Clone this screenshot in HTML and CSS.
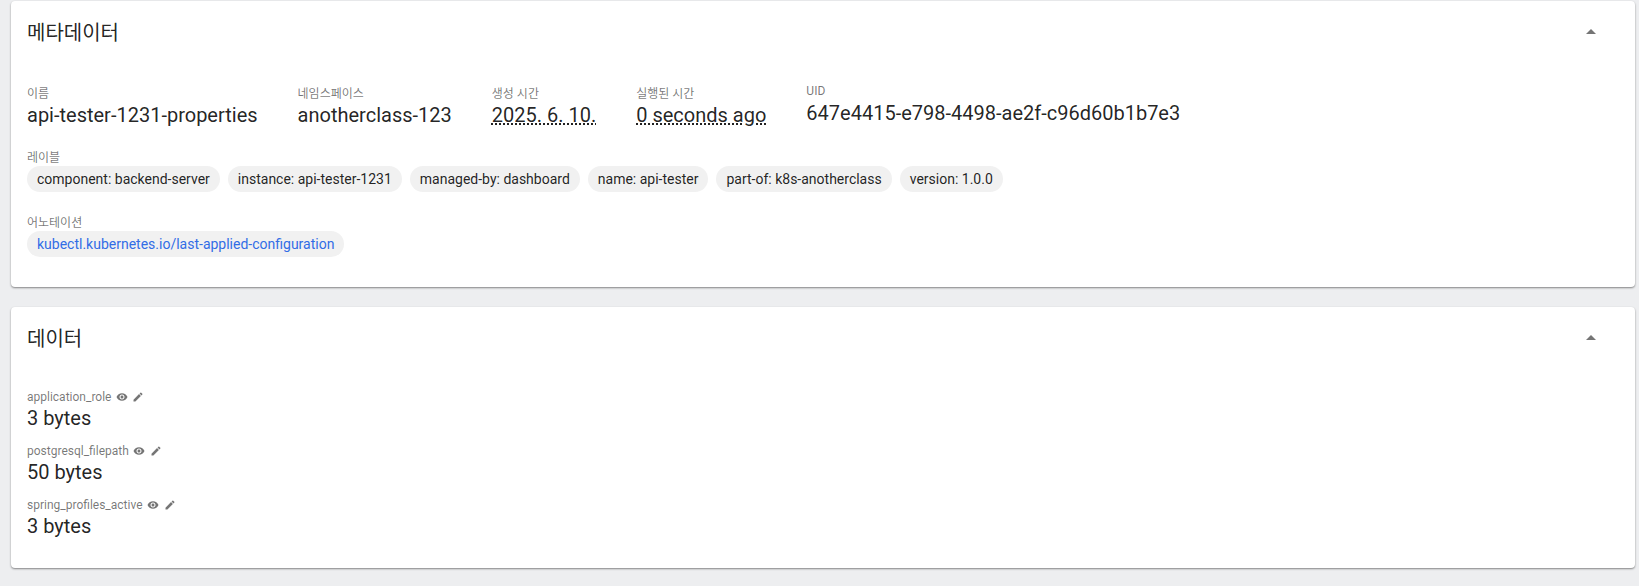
FILE: index.html
```html
<!DOCTYPE html>
<html lang="ko">
<head>
  <meta charset="UTF-8" />
  <title>Secret</title>
  <link rel="stylesheet" href="styles.css">
</head>
<body>

  <!-- Metadata card -->
  <section class="card card-meta">
    <header class="card-header">
      <h2>메타데이터</h2>
      <svg class="toggle" width="24" height="24" viewBox="0 0 24 24"><path d="M7 14l5-5 5 5z"/></svg>
    </header>
    <div class="card-body">
      <div class="fields">
        <div class="field"><div class="label label-ko">이름</div><div class="value">api-tester-1231-properties</div></div>
        <div class="field"><div class="label label-ko">네임스페이스</div><div class="value">anotherclass-123</div></div>
        <div class="field"><div class="label label-ko">생성 시간</div><div class="value"><span class="dotted">2025. 6. 10.</span></div></div>
        <div class="field"><div class="label label-ko">실행된 시간</div><div class="value"><span class="dotted">0 seconds ago</span></div></div>
        <div class="field field-uid"><div class="label">UID</div><div class="value">647e4415-e798-4498-ae2f-c96d60b1b7e3</div></div>
      </div>

      <div class="label">레이블</div>
      <div class="chips">
        <span class="chip">component: backend-server</span>
        <span class="chip">instance: api-tester-1231</span>
        <span class="chip">managed-by: dashboard</span>
        <span class="chip">name: api-tester</span>
        <span class="chip">part-of: k8s-anotherclass</span>
        <span class="chip">version: 1.0.0</span>
      </div>

      <div class="label label-annot">어노테이션</div>
      <div class="chips">
        <span class="chip chip-link">kubectl.kubernetes.io/last-applied-configuration</span>
      </div>
    </div>
  </section>

  <!-- Data card -->
  <section class="card card-data">
    <header class="card-header">
      <h2>데이터</h2>
      <svg class="toggle" width="24" height="24" viewBox="0 0 24 24"><path d="M7 14l5-5 5 5z"/></svg>
    </header>
    <div class="card-body">
      <div class="data-row">
        <div class="data-key">application_role
          <svg class="icon" viewBox="0 0 24 24"><path d="M12 4.5C7 4.5 2.73 7.61 1 12c1.73 4.39 6 7.5 11 7.5s9.27-3.11 11-7.5c-1.73-4.39-6-7.5-11-7.5zM12 17c-2.76 0-5-2.24-5-5s2.24-5 5-5 5 2.24 5 5-2.24 5-5 5zm0-8c-1.66 0-3 1.34-3 3s1.34 3 3 3 3-1.34 3-3-1.34-3-3-3z"/></svg>
          <svg class="icon" viewBox="0 0 24 24"><path d="M3 17.25V21h3.75L17.81 9.94l-3.75-3.75L3 17.25zM20.71 7.04c.39-.39.39-1.02 0-1.41l-2.34-2.34c-.39-.39-1.02-.39-1.41 0l-1.83 1.83 3.75 3.75 1.83-1.83z"/></svg>
        </div>
        <div class="value">3 bytes</div>
      </div>
      <div class="data-row">
        <div class="data-key">postgresql_filepath
          <svg class="icon" viewBox="0 0 24 24"><path d="M12 4.5C7 4.5 2.73 7.61 1 12c1.73 4.39 6 7.5 11 7.5s9.27-3.11 11-7.5c-1.73-4.39-6-7.5-11-7.5zM12 17c-2.76 0-5-2.24-5-5s2.24-5 5-5 5 2.24 5 5-2.24 5-5 5zm0-8c-1.66 0-3 1.34-3 3s1.34 3 3 3 3-1.34 3-3-1.34-3-3-3z"/></svg>
          <svg class="icon" viewBox="0 0 24 24"><path d="M3 17.25V21h3.75L17.81 9.94l-3.75-3.75L3 17.25zM20.71 7.04c.39-.39.39-1.02 0-1.41l-2.34-2.34c-.39-.39-1.02-.39-1.41 0l-1.83 1.83 3.75 3.75 1.83-1.83z"/></svg>
        </div>
        <div class="value">50 bytes</div>
      </div>
      <div class="data-row">
        <div class="data-key">spring_profiles_active
          <svg class="icon" viewBox="0 0 24 24"><path d="M12 4.5C7 4.5 2.73 7.61 1 12c1.73 4.39 6 7.5 11 7.5s9.27-3.11 11-7.5c-1.73-4.39-6-7.5-11-7.5zM12 17c-2.76 0-5-2.24-5-5s2.24-5 5-5 5 2.24 5 5-2.24 5-5 5zm0-8c-1.66 0-3 1.34-3 3s1.34 3 3 3 3-1.34 3-3-1.34-3-3-3z"/></svg>
          <svg class="icon" viewBox="0 0 24 24"><path d="M3 17.25V21h3.75L17.81 9.94l-3.75-3.75L3 17.25zM20.71 7.04c.39-.39.39-1.02 0-1.41l-2.34-2.34c-.39-.39-1.02-.39-1.41 0l-1.83 1.83 3.75 3.75 1.83-1.83z"/></svg>
        </div>
        <div class="value">3 bytes</div>
      </div>
    </div>
  </section>

</body>
</html>
```

FILE: styles.css
```css
/* General styles */
html, body {
  height: 100%;
}

body {
  margin: 0;
  padding: 1px 4px 0 11px;
  box-sizing: border-box;
  overflow: hidden;
  background-color: #edeef0;
  color: rgba(0, 0, 0, 0.87);
  font-family: Roboto, "Noto Sans CJK KR", sans-serif;
}

/* Cards */
.card {
  background: white;
  border-radius: 4px;
  box-shadow: 0 1px 2px rgba(0, 0, 0, 0.45);
  margin-bottom: 20px;
}

.card-meta {
  height: 286px;
}

.card-data {
  height: 261px;
}

.card-header {
  display: flex;
  align-items: center;
  justify-content: space-between;
  height: 62px;
  padding: 0 32px 0 16px;
}

.card-header h2 {
  margin: 2px 0 0;
  font-size: 20px;
  font-weight: 400;
  line-height: 28px;
}

.toggle {
  fill: rgba(0, 0, 0, 0.54);
}

.card-body {
  padding: 22px 16px 0;
}

.card-data .card-body {
  padding-top: 20px;
}

/* Metadata fields */
.fields {
  display: flex;
  gap: 40px;
  margin-bottom: 21px;
}

.label {
  font-size: 12px;
  line-height: 16px;
  color: rgba(0, 0, 0, 0.54);
}

.label-ko {
  padding-top: 1px;
  margin-bottom: -1px;
}

.field-uid {
  margin-top: -2px;
}

.value {
  font-size: 20px;
  line-height: 28px;
}

.dotted {
  text-decoration: underline dotted;
  text-underline-offset: 1px;
}

/* Chips */
.label-annot {
  margin-top: 23px;
}

.chips {
  display: flex;
  gap: 8px;
}

.chip {
  height: 26px;
  padding: 0 10px;
  border-radius: 13px;
  background-color: #f1f1f1;
  font-size: 14px;
  line-height: 26px;
}

.chip-link {
  color: #326de6;
}

/* Data rows */
.data-row {
  margin-bottom: 11px;
}

.data-key {
  display: flex;
  align-items: center;
  gap: 4.5px;
  margin-bottom: -1px;
  font-size: 12px;
  line-height: 16px;
  color: rgba(0, 0, 0, 0.54);
}

.icon {
  width: 12px;
  height: 12px;
  fill: rgba(0, 0, 0, 0.54);
}
```
